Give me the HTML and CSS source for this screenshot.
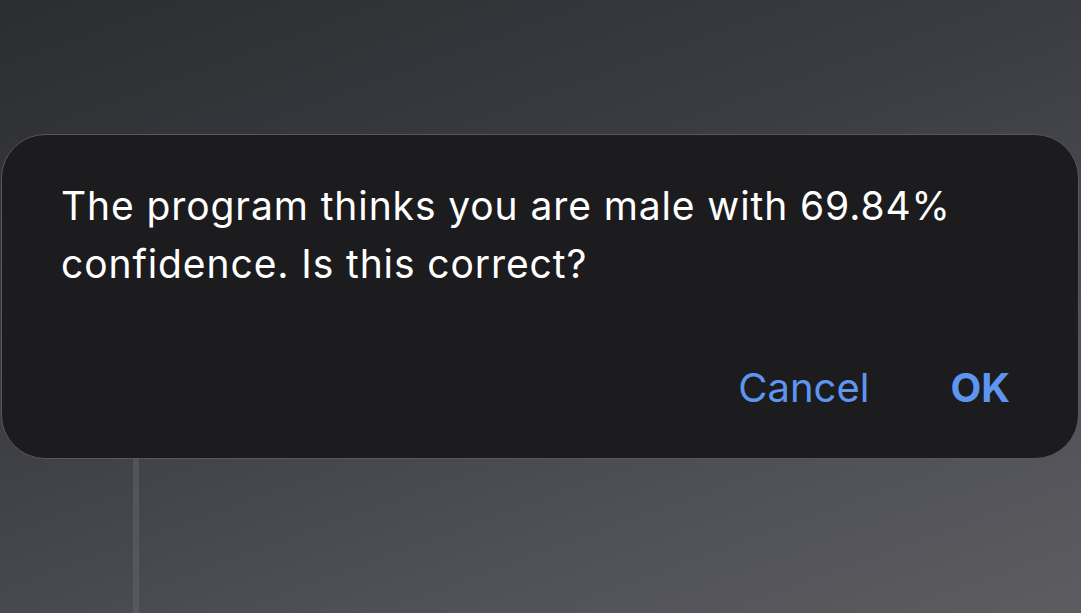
FILE: index.html
```html
<!DOCTYPE html>
<html lang="en">
<head>
    <meta charset="UTF-8">
    <meta name="viewport" content="width=device-width, initial-scale=1.0">
    <title>Confirm</title>
    <link rel="stylesheet" href="styles.css">
</head>
<body>
    <div class="backdrop">
        <div class="seam"></div>
        <div class="dialog">
            <p class="message">The program thinks you are male with 69.84% confidence. Is this correct?</p>
            <div class="actions">
                <button class="action">Cancel</button>
                <button class="action primary">OK</button>
            </div>
        </div>
    </div>
</body>
</html>
```

FILE: styles.css
```css
body {
    margin: 0;
    font-family: Inter, "Open Sans", sans-serif;
}
.backdrop {
    position: relative;
    height: 613px;
    overflow: hidden;
    padding-top: 134px;
    box-sizing: border-box;
    background: linear-gradient(160deg, #2c2d31 0%, #3c3d42 40%, #505156 75%, #5c5c61 100%);
}
.seam {
    position: absolute;
    left: 133px;
    top: 458px;
    width: 6px;
    height: 160px;
    background: rgba(120, 122, 128, 0.3);
}
.dialog {
    position: relative;
    margin-left: 1px;
    width: 1078px;
    height: 325px;
    box-sizing: border-box;
    background-color: #1c1c1e;
    border: 1px solid #58585c;
    border-radius: 44px;
    padding: 42px 68px 0 59px;
}
.message {
    margin: 0;
    color: #fff;
    font-size: 39px;
    letter-spacing: 0.9px;
    line-height: 58px;
    max-width: 920px;
}
.actions {
    display: flex;
    justify-content: flex-end;
    gap: 81px;
    margin-top: 70px;
}
.action {
    background: none;
    border: none;
    padding: 0;
    font-family: inherit;
    font-size: 40px;
    color: #5d95f0;
    cursor: pointer;
}
.primary {
    font-weight: 700;
}
```
